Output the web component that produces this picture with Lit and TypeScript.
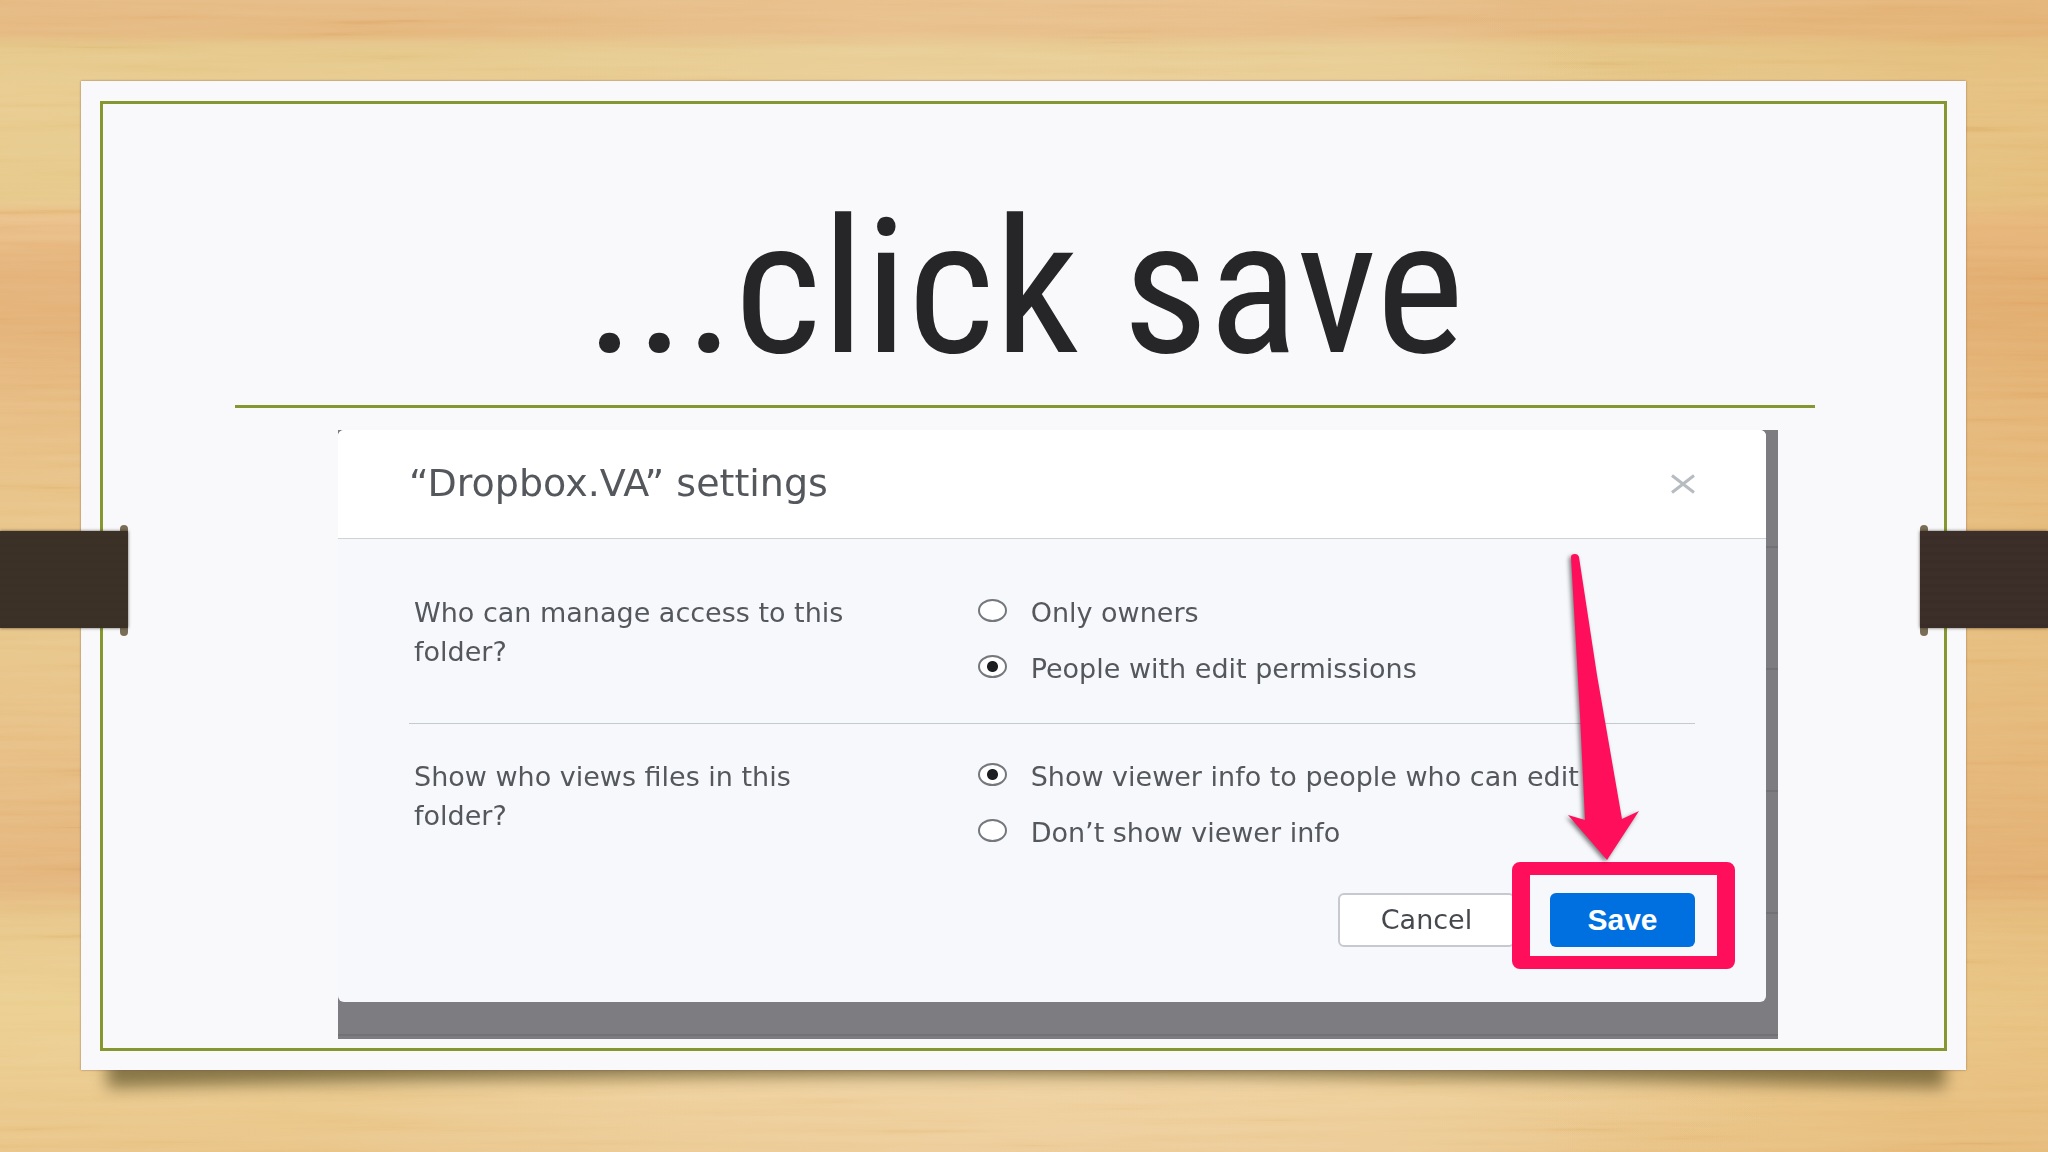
import { LitElement, html, css, svg } from "lit";
import { customElement, property, state } from "lit/decorators.js";

interface Setting {
  id: string;
  question: string;
  options: string[];
  selected: number;
}

@customElement("settings-dialog")
class SettingsDialog extends LitElement {
  @property({ type: String }) heading = "";

  @state() private settings: Setting[] = [
    {
      id: "manage",
      question: "Who can manage access to this folder?",
      options: ["Only owners", "People with edit permissions"],
      selected: 1,
    },
    {
      id: "viewers",
      question: "Show who views files in this folder?",
      options: ["Show viewer info to people who can edit", "Don’t show viewer info"],
      selected: 0,
    },
  ];

  static styles = css`
    :host {
      display: block;
      font-family: "DejaVu Sans", "Liberation Sans", sans-serif;
      color: #54575c;
    }
    .dialog {
      background: #f6f8fc;
      border-radius: 6px;
      overflow: hidden;
    }
    .header {
      display: flex;
      align-items: center;
      justify-content: space-between;
      height: 108px;
      box-sizing: border-box;
      padding: 0 71px;
      background: #fff;
    }
    .heading {
      margin: 0;
      padding-bottom: 2px;
      font-size: 38px;
      line-height: 44px;
      font-weight: 400;
    }
    .close {
      display: flex;
      border: 0;
      padding: 0;
      background: none;
    }
    .body {
      padding: 0 71px 55px;
      border-top: 1px solid #cdd3d6;
    }
    .row {
      display: grid;
      grid-template-columns: 44% 1fr;
      padding: 54px 0 35px 5px;
      font-size: 27px;
      line-height: 39px;
    }
    .row + .row {
      padding-top: 33px;
      padding-bottom: 41px;
      border-top: 1px solid #c5cacf;
    }
    .question {
      margin: 0;
      max-width: 450px;
    }
    .options {
      display: flex;
      flex-direction: column;
      gap: 17px;
    }
    .option {
      display: flex;
      align-items: center;
      gap: 24px;
      white-space: nowrap;
    }
    .radio {
      appearance: none;
      flex: none;
      width: 29px;
      height: 23px;
      margin: 0 0 4px;
      border: 2px solid #74777b;
      border-radius: 50%;
      background: #fff;
    }
    .radio:checked {
      background: radial-gradient(circle, #1c1e21 5px, #fff 6px);
    }
    .actions {
      display: flex;
      justify-content: flex-end;
      gap: 35px;
    }
    .button {
      height: 54px;
      box-sizing: border-box;
      border-radius: 6px;
      font-family: inherit;
      font-size: 27px;
      line-height: 32px;
    }
    .cancel {
      width: 177px;
      padding: 0;
      border: 2px solid #c6c9d0;
      background: #fff;
      color: #45484d;
    }
    .save {
      width: 145px;
      padding: 0;
      border: 0;
      background: #0070e0;
      color: #fff;
      font-family: "Liberation Sans", sans-serif;
      font-size: 30px;
      font-weight: 700;
    }
    .target {
      position: relative;
    }
    .highlight {
      position: absolute;
      inset: -31px -40px -22px -38px;
      border: solid #ff0f5b;
      border-width: 13px 18px;
      border-radius: 8px;
      pointer-events: none;
    }
    .arrow {
      position: absolute;
      right: 45px;
      bottom: 79px;
      pointer-events: none;
      filter: drop-shadow(-2px 2px 2px rgba(0, 0, 0, 0.5));
    }
  `;

  private choose(setting: Setting, index: number) {
    this.settings = this.settings.map((s) => (s === setting ? { ...s, selected: index } : s));
  }

  private renderSetting(s: Setting) {
    return html`
      <div class="row" role="radiogroup" aria-labelledby=${s.id}>
        <p class="question" id=${s.id}>${s.question}</p>
        <div class="options">
          ${s.options.map(
            (text, i) => html`
              <label class="option">
                <input
                  class="radio"
                  type="radio"
                  name=${s.id}
                  .checked=${s.selected === i}
                  @change=${() => this.choose(s, i)}
                />
                <span>${text}</span>
              </label>
            `
          )}
        </div>
      </div>
    `;
  }

  render() {
    return html`
      <section class="dialog" role="dialog" aria-labelledby="heading">
        <header class="header">
          <h2 class="heading" id="heading">${this.heading}</h2>
          <button class="close" type="button" aria-label="Close">
            <svg width="24" height="20" viewBox="0 0 24 20" fill="none" stroke="#b7bcc1" stroke-width="3">
              <path d="M1 1.5 23 18.5M23 1.5 1 18.5" />
            </svg>
          </button>
        </header>
        <div class="body">
          ${this.settings.map((s) => this.renderSetting(s))}
          <div class="actions">
            <button class="button cancel" type="button">Cancel</button>
            <div class="target">
              <button class="button save" type="button">Save</button>
              <div class="highlight"></div>
              <svg class="arrow" width="90" height="323" viewBox="0 0 90 323" aria-hidden="true">
                <path
                  d="M11 12 Q11 9 15 9 Q18 9 19 12 L37 130 L62 274 L79 266 L47 315 L8 270 L25 275 L20 170 Z"
                  fill="#ff0f5b"
                />
              </svg>
            </div>
          </div>
        </div>
      </section>
    `;
  }
}

@customElement("app-root")
class AppRoot extends LitElement {
  static styles = css`
    :host {
      display: block;
    }
    .slide {
      position: relative;
      isolation: isolate;
      box-sizing: border-box;
      min-height: 100vh;
      padding: 81px 82px 81px 81px;
      overflow: hidden;
      background:
        radial-gradient(ellipse 42% 75% at 50% 60%, rgba(244, 220, 186, 0.75), rgba(244, 220, 186, 0)),
        linear-gradient(90deg, rgba(222, 160, 85, 0) 70%, rgba(222, 160, 85, 0.28)),
        linear-gradient(
          180deg,
          #e6bb84 0%,
          #e5b87f 2.8%,
          #e5c88a 4.2%,
          #e8cb8e 8%,
          #e6c98a 17%,
          #eabf88 19%,
          #e4b279 24%,
          #e3b278 28%,
          #e7bd83 36%,
          #e8c488 45%,
          #e8c68a 56%,
          #e7be84 66%,
          #e4b57c 76.5%,
          #e8c78a 80%,
          #ebcf91 87%,
          #ebca8d 94%,
          #e9c487 100%
        );
    }
    .grain {
      position: absolute;
      inset: 0;
      z-index: -2;
      width: 100%;
      height: 100%;
      opacity: 0.16;
      mix-blend-mode: soft-light;
    }
    .paper {
      position: relative;
      padding: 20px 19px 19px;
      background: #f9f9fb;
      box-shadow: 0 0 2px rgba(120, 80, 70, 0.7);
    }
    .shadow {
      position: absolute;
      z-index: -1;
      left: 96px;
      right: 92px;
      bottom: 52px;
      width: calc(100% - 188px);
      height: 60px;
      overflow: visible;
      filter: blur(8px);
    }
    .frame {
      border: 3px solid #84982f;
      padding-bottom: 9px;
    }
    .title {
      margin: 0 129px 22px 132px;
      padding: 74px 0 7px;
      border-bottom: 3px solid #84982f;
      font-family: "Liberation Sans Narrow", "Arial Narrow", "Roboto Condensed", "Liberation Sans", sans-serif;
      font-size: 188px;
      line-height: 220px;
      font-weight: 400;
      text-align: center;
      white-space: nowrap;
      color: #262628;
    }
    .figure {
      margin: 0 166px 0 235px;
      padding: 0 12px 37px 0;
      background:
        repeating-linear-gradient(180deg, transparent 0 116px, #727176 116px 118px, transparent 118px 122px)
        #7d7c81;
    }
    .band {
      position: absolute;
      top: 531px;
      width: 128px;
      height: 97px;
      background: repeating-linear-gradient(180deg, #3b3127 0 5px, #3a3026 5px 8px);
      box-shadow: 0 0 3px rgba(40, 30, 20, 0.7);
    }
    .slot {
      position: absolute;
      top: 525px;
      width: 8px;
      height: 111px;
      border-radius: 4px;
      background: #7b6e58;
    }
    .left {
      left: 0;
    }
    .right {
      right: 0;
      background: repeating-linear-gradient(180deg, #3c2e29 0 5px, #3a2c27 5px 8px);
    }
    .slot-left {
      left: 120px;
    }
    .slot-right {
      right: 120px;
    }
  `;

  private grain() {
    return svg`
      <filter id="wood" x="0" y="0" width="100%" height="100%">
        <feTurbulence type="fractalNoise" baseFrequency="0.004 0.12" numOctaves="4" seed="7" />
        <feColorMatrix type="saturate" values="0" />
        <feComponentTransfer>
          <feFuncR type="linear" slope="2" intercept="-0.5" />
          <feFuncG type="linear" slope="2" intercept="-0.5" />
          <feFuncB type="linear" slope="2" intercept="-0.5" />
          <feFuncA type="linear" slope="0" intercept="1" />
        </feComponentTransfer>
      </filter>
      <rect width="100%" height="100%" filter="url(#wood)" />
    `;
  }

  render() {
    return html`
      <main class="slide">
        <svg class="grain" aria-hidden="true">${this.grain()}</svg>
        <svg class="shadow" viewBox="0 0 1000 60" preserveAspectRatio="none" aria-hidden="true">
          <path d="M6 0H994V48Q500 22 6 48Z" fill="#5c5128" fill-opacity="0.7" />
        </svg>
        <article class="paper">
          <div class="frame">
            <h1 class="title">...click save</h1>
            <div class="figure">
              <settings-dialog heading="“Dropbox.VA” settings"></settings-dialog>
            </div>
          </div>
        </article>
        <div class="slot slot-left"></div>
        <div class="slot slot-right"></div>
        <div class="band left"></div>
        <div class="band right"></div>
      </main>
    `;
  }
}
